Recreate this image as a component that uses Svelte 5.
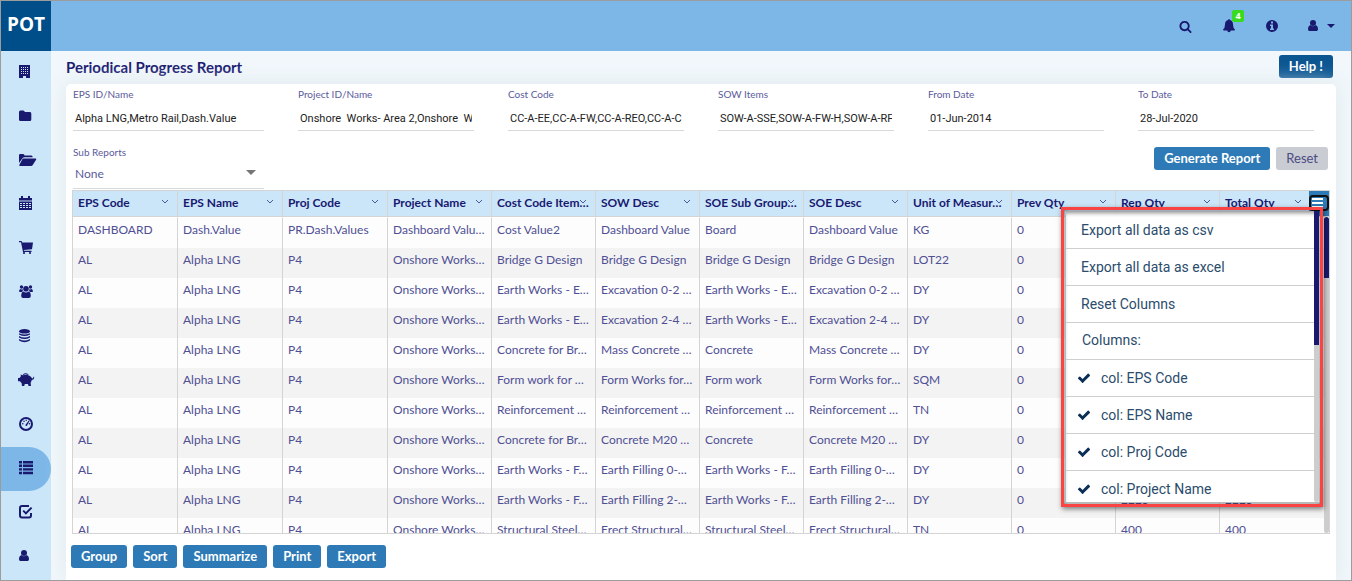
<script>
  const navItems = ['Company', 'Folder', 'Projects', 'Calendar', 'Procurement', 'Resources', 'Data', 'Budget', 'Dashboard', 'Reports', 'Tasks', 'Account'];
  const activeItem = 'Reports';

  const fields = [
    { id: 'eps', label: 'EPS ID/Name', value: 'Alpha LNG,Metro Rail,Dash.Value' },
    { id: 'project', label: 'Project ID/Name', value: 'Onshore  Works- Area 2,Onshore  Works- Area 1' },
    { id: 'cost', label: 'Cost Code', value: 'CC-A-EE,CC-A-FW,CC-A-REO,CC-A-C,CC-A' },
    { id: 'sow', label: 'SOW Items', value: 'SOW-A-SSE,SOW-A-FW-H,SOW-A-RF,SOW' },
    { id: 'from', label: 'From Date', value: '01-Jun-2014' },
    { id: 'to', label: 'To Date', value: '28-Jul-2020' },
  ];

  const columns = [
    { name: 'EPS Code', width: 105 },
    { name: 'EPS Name', width: 105 },
    { name: 'Proj Code', width: 105 },
    { name: 'Project Name', width: 104 },
    { name: 'Cost Code Item…', width: 104 },
    { name: 'SOW Desc', width: 104 },
    { name: 'SOE Sub Group…', width: 104 },
    { name: 'SOE Desc', width: 104 },
    { name: 'Unit of Measur…', width: 104 },
    { name: 'Prev Qty', width: 104 },
    { name: 'Rep Qty', width: 104 },
    { name: 'Total Qty', width: 110 },
  ];

  const al = (item, sow, group, soe, unit, rep = '') =>
    ['AL', 'Alpha LNG', 'P4', 'Onshore Works…', item, sow, group, soe, unit, '0', rep, rep];

  const rows = [
    ['DASHBOARD', 'Dash.Value', 'PR.Dash.Values', 'Dashboard Valu…', 'Cost Value2', 'Dashboard Value', 'Board', 'Dashboard Value', 'KG', '0', '', ''],
    al('Bridge G Design', 'Bridge G Design', 'Bridge G Design', 'Bridge G Design', 'LOT22'),
    al('Earth Works - E…', 'Excavation 0-2 …', 'Earth Works - E…', 'Excavation 0-2 …', 'DY'),
    al('Earth Works - E…', 'Excavation 2-4 …', 'Earth Works - E…', 'Excavation 2-4 …', 'DY'),
    al('Concrete for Br…', 'Mass Concrete …', 'Concrete', 'Mass Concrete …', 'DY'),
    al('Form work for …', 'Form Works for…', 'Form work', 'Form Works for…', 'SQM'),
    al('Reinforcement …', 'Reinforcement …', 'Reinforcement …', 'Reinforcement …', 'TN'),
    al('Concrete for Br…', 'Concrete M20 …', 'Concrete', 'Concrete M20 …', 'DY'),
    al('Earth Works - F…', 'Earth Filling 0-…', 'Earth Works - F…', 'Earth Filling 0-…', 'DY'),
    al('Earth Works - F…', 'Earth Filling 2-…', 'Earth Works - F…', 'Earth Filling 2-…', 'DY', '2225'),
    al('Structural Steel…', 'Erect Structural…', 'Structural Steel…', 'Erect Structural…', 'TN', '400'),
  ];

  const menuActions = ['Export all data as csv', 'Export all data as excel', 'Reset Columns'];
  const menuColumns = ['EPS Code', 'EPS Name', 'Proj Code', 'Project Name'];
  const footerActions = ['Group', 'Sort', 'Summarize', 'Print', 'Export'];
</script>

{#snippet userIcon()}
  <circle cx="5" cy="5" r="3" />
  <path d="M2.4 7C.8 7.600 0 9.300 0 11.200 0 12.400.8 13 1.800 13h6.400C9.200 13 10 12.400 10 11.200 10 9.300 9.200 7.600 7.600 7 6.200 8.700 3.800 8.700 2.400 7z" />
{/snippet}

{#snippet navIcon(name)}
  <svg class="icon" viewBox="0 0 18 16" aria-hidden="true">
    {#if name === 'Company'}
      <path fill-rule="evenodd" d="M0 1h11v13H7v-2H4v2H0zM2 3v1h1V3zm2 0v1h1V3zm2 0v1h1V3zm2 0v1h1V3zM2 5v1h1V5zm2 0v1h1V5zm2 0v1h1V5zm2 0v1h1V5zM2 7v1h1V7zm2 0v1h1V7zm2 0v1h1V7zm2 0v1h1V7zM2 9v1h1V9zm2 0v1h1V9zm2 0v1h1V9zm2 0v1h1V9z" />
    {:else if name === 'Folder'}
      <path d="M0 4q0-1.500 1.500-1.500h2.800Q5.600 2.500 5.800 4H11q1.300 0 1.300 1.500v6q0 1.500-1.500 1.500H1.500Q0 13 0 11.500z" />
    {:else if name === 'Projects'}
      <path d="M0 3.300Q0 2 1.300 2h2.900q1 0 1.400 1.500h6.800q1.200 0 1.300 1.800H5.500q-1.300 0-2.200 1.200L0 11z" />
      <path d="M4.500 6.500h12.200q1 .2.400 1.200l-3.200 5Q13.200 14 12 14H.8q-1-.2-.4-1.200l2.700-5q.5-1.200 1.400-1.300z" />
    {:else if name === 'Calendar'}
      <path fill-rule="evenodd" d="M0 2h2V0h2v2h5V0h2v2h2v2.500H0zM0 5.500h13V14H0zM1 7v1h2V7zm3 0v1h2V7zm3 0v1h2V7zm3 0v1h2V7zM1 9v1h2V9zm3 0v1h2V9zm3 0v1h2V9zm3 0v1h2V9zM1 11v1h2v-1zm3 0v1h2v-1zm3 0v1h2v-1zm3 0v1h2v-1z" />
    {:else if name === 'Procurement'}
      <path d="M0 1h2.600l.6 1.500H14l-1 6.700-8.200.7.200.9h7.500v1.200H4L2 2.200H0z" />
      <circle cx="5" cy="13" r="1.100" /><circle cx="11" cy="13" r="1.100" />
    {:else if name === 'Resources'}
      <circle cx="2.500" cy="3" r="1.700" /><circle cx="11.500" cy="3" r="1.700" />
      <circle cx="7" cy="4.800" r="2.800" />
      <path d="M1.200 5.100Q.1 5.600 0 7.600l.8.500h2.400q.2-1.400.7-1.900L3.500 5q-1.100.8-2.300.1zM12.800 5.100q1.100.5 1.200 2.500l-.8.500h-2.400q-.2-1.400-.7-1.900l.4-1.200q1.100.8 2.300.1zM4.200 7.400Q2.200 8.300 2.200 12q0 2 2 2h5.600q2 0 2-2 0-3.700-2-4.600-2.800 2-5.600 0z" />
    {:else if name === 'Data'}
      <ellipse cx="5.500" cy="3.300" rx="5.500" ry="2.300" />
      <path d="M0 5.200q5.500 2.400 11 0v1.400q-5.500 3-11 0zM0 8q5.500 3 11 0v1.600q-5.500 3-11 0zM0 11q5.500 3 11 0v1.400q-5.500 3.600-11 0z" />
    {:else if name === 'Budget'}
      <path d="M-1 6H.6Q1 5 2 4.200L1.500 2.600l2.400.6Q7 2 10 3.400 12.300 4.200 13 6.300l1 .2.400-1.700.8.200q0 2.800-2.500 3Q12.500 9.700 11.600 10.800L12 14H9.500L9 12H5.800l-.6 2H3l-.4-3Q1.600 10.300 1 9.200H-1z" />
      <path d="M3.800 2.400Q6.500.2 9.700 2.400L9 3Q6.500 1.600 4.400 3z" />
    {:else if name === 'Dashboard'}
      <circle cx="7" cy="8" r="6" class="line" />
      <circle cx="3.800" cy="7.800" r=".8" /><circle cx="5" cy="5.200" r=".8" /><circle cx="10.500" cy="7.800" r=".8" /><circle cx="7.200" cy="4.200" r=".7" />
      <path d="m6.400 9 3.300-4.600.8.500-2.700 5Q6.600 10.500 6.400 9z" />
    {:else if name === 'Reports'}
      <path d="M0 1h3v2.400H0zM4 1h10v2.400H4zM0 4.600h3V7H0zm4 0h10V7H4zM0 8.200h3v2.400H0zm4 0h10v2.400H4zm-4 3.600h3v2.400H0zm4 0h10v2.400H4z" />
    {:else if name === 'Tasks'}
      <path class="line" d="M10 2H3Q1 2 1 4v7.500q0 2 2 2h7q2 0 2-2V9" />
      <path d="m3.500 7.300 1.400-1.400 2 2 5-5 1.400 1.400-6.400 6.400z" />
    {:else}
      {@render userIcon()}
    {/if}
  </svg>
{/snippet}

{#snippet chevron()}
  <svg class="chevron" viewBox="0 0 8 6" aria-hidden="true"><path d="m1 1 3 3 3-3" /></svg>
{/snippet}

<div class="app">
  <header class="topbar">
    <a class="brand" href="#home">POT</a>
    <div class="tools">
      <button class="tool" aria-label="Search">
        <svg viewBox="0 0 1792 1792" width="13" height="13"><path d="M1216 832q0-185-131.500-316.500t-316.500-131.500-316.500 131.500-131.500 316.500 131.500 316.500 316.500 131.500 316.500-131.500 131.500-316.500zm512 832q0 52-38 90t-90 38q-54 0-90-38l-343-342q-179 124-399 124-143 0-273.500-55.500t-225-150-150-225-55.500-273.500 55.500-273.500 150-225 225-150 273.500-55.500 273.500 55.500 225 150 150 225 55.500 273.500q0 220-124 399l343 343q37 37 37 90z" /></svg>
      </button>
      <button class="tool" aria-label="Notifications">
        <svg viewBox="0 0 14 14" width="14" height="14"><path d="M7 0q.8 0 .8 1.100Q11 1.800 11 5.500 11 9 13 10.500q0 1-1 1H8.800Q8.500 13.300 7 13.300T5.200 11.500H2q-1 0-1-1Q3 9 3 5.500 3 1.800 6.200 1.100 6.200 0 7 0z" /></svg>
        <span class="badge">4</span>
      </button>
      <button class="tool" aria-label="Information">
        <svg viewBox="0 0 12 12" width="12" height="12"><path fill-rule="evenodd" d="M6 0a6 6 0 1 0 0 12A6 6 0 0 0 6 0zM5 1.500h2v2H5zM4 4.500h3v4h1V10H4V8.500h1V6H4z" /></svg>
      </button>
      <button class="tool user" aria-label="Account menu">
        <svg viewBox="0 1 10 14" width="10" height="14">{@render userIcon()}</svg>
        <span class="caret"></span>
      </button>
    </div>
  </header>

  <div class="body">
    <nav class="sidebar" aria-label="Main">
      {#each navItems as name}
        <a class="nav-item" class:active={name === activeItem} href={'#' + name.toLowerCase()} aria-label={name}>
          {@render navIcon(name)}
        </a>
      {/each}
    </nav>

    <main>
      <div class="heading">
        <h1>Periodical Progress Report</h1>
        <button class="btn dark">Help !</button>
      </div>

      <section class="card">
        <form class="filters" onsubmit={(e) => e.preventDefault()}>
          <div class="fields">
            {#each fields as field}
              <div class="field">
                <label for={field.id}>{field.label}</label>
                <input id={field.id} type="text" value={field.value} />
              </div>
            {/each}
          </div>
          <div class="fields">
            <div class="field">
              <label for="sub">Sub Reports</label>
              <div class="select">
                <select id="sub"><option>None</option></select>
              </div>
            </div>
            <div class="actions">
              <button class="btn" type="submit">Generate Report</button>
              <button class="btn muted" type="reset">Reset</button>
            </div>
          </div>
        </form>

        <div class="grid">
          <div class="viewport">
            <table>
              <colgroup>
                {#each columns as column}<col style:width="{column.width}px" />{/each}
              </colgroup>
              <thead>
                <tr>
                  {#each columns as column}
                    <th scope="col"><div class="head"><span>{column.name}</span>{@render chevron()}</div></th>
                  {/each}
                </tr>
              </thead>
              <tbody>
                {#each rows as row}
                  <tr>{#each row as cell}<td>{cell}</td>{/each}</tr>
                {/each}
              </tbody>
            </table>
          </div>
          <div class="scroll"></div>
          <div class="menu-corner">
            <button class="menu-button" aria-label="Grid menu"><span></span><span></span><span></span></button>
          </div>

          <div class="callout">
            <div class="menu">
              <ul>
                {#each menuActions as action}
                  <li><button>{action}</button></li>
                {/each}
                <li class="caption">Columns:</li>
                {#each menuColumns as column}
                  <li>
                    <button class="toggle">
                      <svg viewBox="0 0 1792 1792" width="14" height="14" aria-hidden="true"><path d="M1671 566q0 40-28 68l-724 724-136 136q-28 28-68 28t-68-28l-136-136-362-362q-28-28-28-68t28-68l136-136q28-28 68-28t68 28l294 295 656-657q28-28 68-28t68 28l136 136q28 28 28 68z" /></svg>
                      <span>col: {column}</span>
                    </button>
                  </li>
                {/each}
              </ul>
              <div class="menu-scroll"></div>
            </div>
          </div>
        </div>

        <div class="footer">
          {#each footerActions as action}
            <button class="btn">{action}</button>
          {/each}
        </div>
      </section>
    </main>
  </div>
</div>

<style>
  :global(body) {
    margin: 0;
  }
  * {
    box-sizing: border-box;
  }
  button,
  input,
  select {
    font: inherit;
    color: inherit;
    border: 0;
    padding: 0;
    margin: 0;
    background: none;
  }
  .app {
    display: flex;
    flex-direction: column;
    height: 100vh;
    border: 1px solid #9c9c9c;
    font-family: Lato, sans-serif;
    color: #191970;
    overflow: hidden;
  }
  svg {
    fill: #191970;
    display: block;
    overflow: visible;
  }

  .topbar {
    display: flex;
    justify-content: space-between;
    height: 50px;
    flex: none;
    background: #7cb7e8;
  }
  .brand {
    width: 50px;
    background: #004e89;
    color: #fff;
    font: 700 19px/46px "Open Sans", sans-serif;
    text-align: center;
    text-decoration: none;
  }
  .tools {
    display: flex;
    align-items: center;
    gap: 30px;
    padding-right: 16px;
  }
  .tool {
    display: flex;
    position: relative;
    align-items: center;
  }
  .user {
    gap: 9px;
  }
  .badge {
    position: absolute;
    left: 10px;
    bottom: 11px;
    width: 12px;
    height: 12px;
    border-radius: 2px;
    background: #37dc1e;
    color: #fff;
    font: 700 9px/11px "Open Sans", sans-serif;
    text-align: center;
  }
  .caret {
    border: 4px solid transparent;
    border-top-color: #191970;
    border-bottom: 0;
  }

  .body {
    display: flex;
    flex: 1;
    min-height: 0;
  }
  .sidebar {
    width: 50px;
    flex: none;
    background: #cbe6f9;
  }
  .nav-item {
    display: flex;
    align-items: center;
    height: 44px;
    padding: 0 0 2px 18px;
  }
  .nav-item.active {
    background: #7cb7e8;
    border-radius: 0 22px 22px 0;
  }
  .icon {
    width: 18px;
    height: 16px;
  }
  .line {
    fill: none;
    stroke: #191970;
    stroke-width: 2;
  }

  main {
    display: flex;
    flex-direction: column;
    flex: 1;
    min-width: 0;
    padding: 0 15px;
    background: #f1f7fb;
  }
  .heading {
    display: flex;
    align-items: center;
    justify-content: space-between;
    height: 33px;
    flex: none;
    padding: 0 3px 2px 0;
  }
  h1 {
    margin: 0;
    font-size: 15px;
    font-weight: 700;
  }
  .btn {
    height: 23px;
    padding: 0 10px;
    border-radius: 3px;
    background: #2d7ab6;
    color: #fff;
    font-size: 13px;
    font-weight: 700;
    line-height: 23px;
  }
  .btn.dark {
    background: #0b5591;
  }
  .btn.muted {
    background: #c9ccd2;
    color: #4b4b85;
    font-weight: 400;
  }

  .card {
    flex: 1;
    background: #fff;
    border-radius: 5px 5px 0 0;
    box-shadow: 0 0 20px #dfe9ee;
  }
  .filters {
    padding: 4px 22px 0 7px;
  }
  .fields {
    display: grid;
    grid-template-columns: 191fr repeat(5, 176fr);
    column-gap: 34px;
    height: 58px;
  }
  .fields + .fields {
    height: 44px;
  }
  label {
    display: block;
    font-size: 10px;
    line-height: 12px;
    color: #5b5b9b;
  }
  .field input {
    width: 100%;
    height: 31px;
    padding: 6px 2px 0;
    border-bottom: 1px solid #d9d9d9;
    font: 11px Roboto, sans-serif;
    color: #222;
  }
  .select {
    position: relative;
  }
  .select::after {
    content: "";
    position: absolute;
    right: 8px;
    top: 12px;
    border: 5px solid transparent;
    border-top-color: #757575;
    border-bottom: 0;
    pointer-events: none;
  }
  select {
    appearance: none;
    width: 100%;
    height: 31px;
    padding-left: 2px;
    border-bottom: 1px solid #d9d9d9;
    border-radius: 0;
    font-size: 12px;
    color: #5b5b9b;
  }
  .actions {
    grid-column: 2 / -1;
    display: flex;
    justify-content: flex-end;
    align-items: flex-start;
    gap: 6px;
    margin-right: -14px;
    padding-top: 1px;
  }

  .grid {
    position: relative;
    height: 344px;
    margin: 0 6px;
    border: 1px solid #d4d4d4;
  }
  .viewport {
    height: 100%;
    overflow: hidden;
  }
  table {
    width: 100%;
    table-layout: fixed;
    border-spacing: 0;
    font-size: 12px;
  }
  th,
  td {
    padding: 0 0 0 5px;
    border-right: 1px solid #d4d4d4;
    text-align: left;
    white-space: nowrap;
    overflow: hidden;
  }
  th:last-child,
  td:last-child {
    border-right: 0;
  }
  th {
    height: 26px;
    padding-bottom: 2px;
    background: #cbe6f9;
    border-bottom: 1px solid #d4d4d4;
  }
  .head {
    display: grid;
    grid-template-columns: 1fr 16px;
    align-items: center;
  }
  th:last-child .head {
    padding-right: 20px;
  }
  .head span {
    min-width: 0;
  }
  .chevron {
    width: 8px;
    height: 6px;
    margin-bottom: 2px;
    fill: none;
    stroke: #4a5a98;
  }
  td {
    height: 30px;
    padding-bottom: 8px;
    color: #4f4f94;
    background: #fdfdfd;
  }
  tbody tr:first-child td {
    height: 31px;
    border-top: 1px solid #fff;
  }
  tbody tr:nth-child(even) td {
    background: #f3f3f3;
  }
  .scroll {
    position: absolute;
    right: 0;
    top: 26px;
    bottom: 0;
    width: 5px;
    background: linear-gradient(#191970 61px, #cdcdcd 61px);
    border-radius: 3px;
  }
  .menu-corner {
    position: absolute;
    right: 0;
    top: 0;
    width: 20px;
    height: 25px;
    padding-top: 6px;
    background: #2d7ab6;
  }
  .menu-button {
    display: flex;
    flex-direction: column;
    gap: 2px;
    width: 16px;
    height: 12px;
    margin-left: 2px;
    padding: 0 4px 0 1px;
    border-radius: 2px;
    justify-content: center;
    outline: 2px solid #101010;
  }
  .menu-button span {
    height: 2px;
    background: #fff;
  }

  /* Framed column menu floating over the grid */
  .callout {
    position: absolute;
    right: 6px;
    top: 16px;
    width: 262px;
    height: 300px;
    padding: 1px 1px 1px 1px;
    border: 3px solid #fa4343;
    box-shadow: 1px 2px 5px rgb(0 0 0 / 50%), inset 0 0 4px rgb(0 0 0 / 60%);
  }
  .menu {
    display: flex;
    height: 100%;
    border: 1px solid #b9b9b9;
    border-width: 0 0 1px 1px;
    background: #fff;
    box-shadow: inset 0 4px 4px -2px rgb(0 0 0 / 45%);
    overflow: hidden;
    font: 14px Roboto, sans-serif;
    color: #2b4c6c;
  }
  ul {
    flex: 1;
    margin: 0;
    padding: 0;
    list-style: none;
  }
  li {
    height: 37px;
    border-bottom: 1px solid #cfcfcf;
  }
  li:first-child {
    height: 38px;
  }
  li button {
    width: 100%;
    height: 100%;
    padding-left: 15px;
    text-align: left;
  }
  .toggle {
    display: flex;
    align-items: center;
    gap: 10px;
    padding-left: 11px;
  }
  .toggle svg {
    fill: #0b2f55;
  }
  .caption {
    padding-left: 16px;
    line-height: 35px;
    font-size: 14px;
  }
  .menu-scroll {
    width: 5px;
    background: linear-gradient(#191970 134px, #cdcdcd 134px);
    border-radius: 0 0 3px 3px;
  }

  .footer {
    display: flex;
    gap: 6px;
    padding: 11px 5px;
  }
</style>
